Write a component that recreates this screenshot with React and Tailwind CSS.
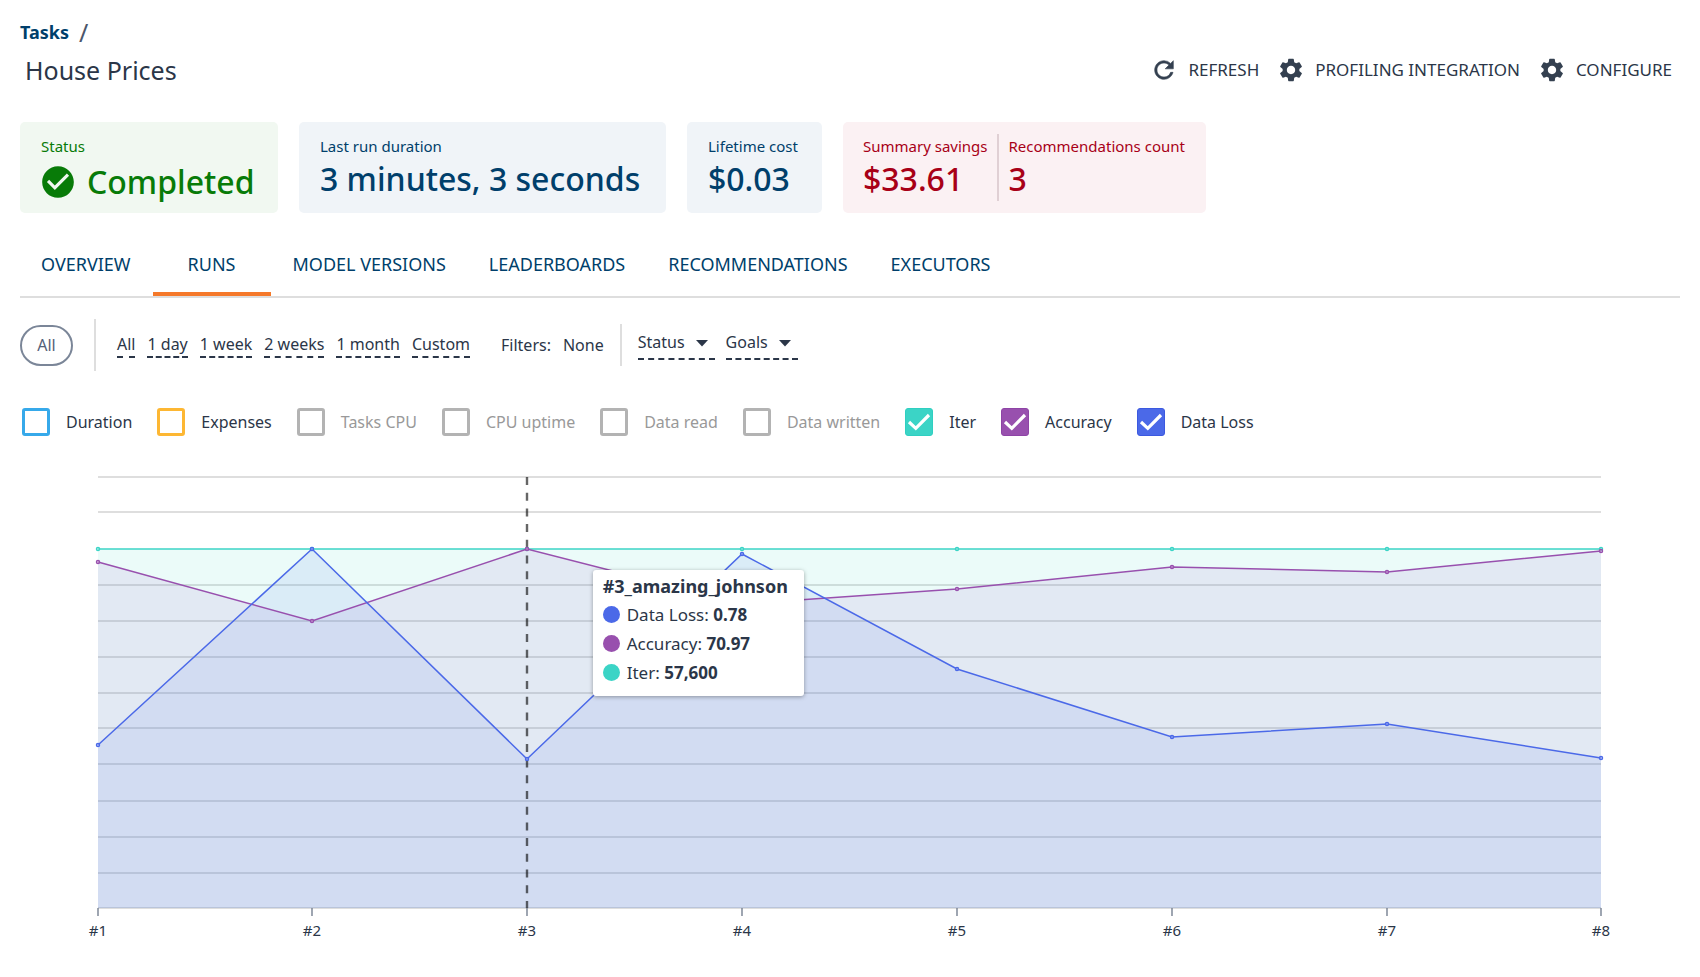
import { MdSettings, MdCheckCircle } from "react-icons/md";

const TABS = ["OVERVIEW", "RUNS", "MODEL VERSIONS", "LEADERBOARDS", "RECOMMENDATIONS", "EXECUTORS"];
const RANGES = ["All", "1 day", "1 week", "2 weeks", "1 month", "Custom"];

const METRICS = [
  { id: "duration", label: "Duration", box: "border-[#36a9ea]" },
  { id: "expenses", label: "Expenses", box: "border-[#fdb733]" },
  { id: "tasks-cpu", label: "Tasks CPU", box: "border-[#b3b3b3]", muted: true },
  { id: "cpu-uptime", label: "CPU uptime", box: "border-[#b3b3b3]", muted: true },
  { id: "data-read", label: "Data read", box: "border-[#b3b3b3]", muted: true },
  { id: "data-written", label: "Data written", box: "border-[#b3b3b3]", muted: true },
  { id: "iter", label: "Iter", box: "border-[#2fcfc1] bg-[#3bd4c6]", checked: true },
  { id: "accuracy", label: "Accuracy", box: "border-[#8e44a6] bg-[#9850ae]", checked: true },
  { id: "data-loss", label: "Data Loss", box: "border-[#3c59e0] bg-[#4b69e8]", checked: true },
];

const X = [98, 312, 527, 742, 957, 1172, 1387, 1601];
const BASE = 909;
const SERIES = [
  { id: "iter", color: "#3bd4c6", fill: "#3bd4c6", y: [550, 550, 550, 550, 550, 550, 550, 550] },
  { id: "accuracy", color: "#9850ae", fill: "#9850c8", y: [563, 622, 550, 605, 590, 568, 573, 552] },
  { id: "loss", color: "#4b69e8", fill: "#4069e8", y: [746, 550, 760, 555, 670, 738, 725, 759] },
];
const GRID = [478, 513, 586, 622, 658, 694, 729, 765, 802, 838, 874, 909];

function Chart() {
  return (
    <svg viewBox="20 470 1660 480" className="block h-auto w-full" role="img" aria-label="Metrics by run">
      {GRID.map((y) => (
        <line key={y} x1="98" x2="1601" y1={y} y2={y} stroke="#dedede" strokeWidth="1.8" />
      ))}
      {SERIES.map((s) => (
        <polygon
          key={s.id}
          fill={s.fill}
          fillOpacity="0.1"
          points={`98,${BASE} ${X.map((x, i) => `${x},${s.y[i]}`).join(" ")} 1601,${BASE}`}
        />
      ))}
      <line x1="527" x2="527" y1="478" y2="909" stroke="#000" strokeOpacity="0.6" strokeWidth="2.4" strokeDasharray="8 7.7" />
      {SERIES.map((s) => (
        <g key={s.id} stroke={s.color} strokeWidth="1.5">
          <polyline fill="none" points={X.map((x, i) => `${x},${s.y[i]}`).join(" ")} />
          {X.map((x, i) => (
            <circle key={x} cx={x} cy={s.y[i]} r="1.5" fill="#fff" fillOpacity="0.5" />
          ))}
        </g>
      ))}
      {X.map((x, i) => (
        <g key={x}>
          <line x1={x} x2={x} y1="909" y2="917" stroke="#6b7688" strokeWidth="1.3" />
          <text x={x} y="937" textAnchor="middle" fontSize="15" fill="#2b3648">{`#${i + 1}`}</text>
        </g>
      ))}
    </svg>
  );
}

function RefreshIcon({ className }) {
  return (
    <svg viewBox="0 0 24 24" className={className} fill="currentColor" stroke="currentColor" strokeWidth="0.5" aria-hidden="true">
      <path d="M17.65 6.35A7.958 7.958 0 0 0 12 4c-4.42 0-7.99 3.58-7.99 8s3.57 8 7.99 8c3.73 0 6.84-2.55 7.73-6h-2.08A5.99 5.99 0 0 1 12 18c-3.31 0-6-2.69-6-6s2.69-6 6-6c1.66 0 3.14.69 4.22 1.78L13 11h7V4l-2.35 2.35z" />
    </svg>
  );
}

function Action({ icon: Icon, children }) {
  return (
    <button className="flex items-center gap-[10px] text-[17px] leading-6 text-[#2b3648]">
      <Icon className="size-7 text-[#344050]" />
      {children}
    </button>
  );
}

function Stat({ label, children }) {
  return (
    <div>
      <div className="text-[15px] leading-6 whitespace-nowrap">{label}</div>
      <div className="text-[32px] leading-[42px] font-medium whitespace-nowrap">{children}</div>
    </div>
  );
}

function TooltipRow({ dot, label, value }) {
  return (
    <div className="flex items-center gap-[7px] text-[17px] leading-[29px]">
      <span className={`size-[17px] rounded-full ${dot}`} />
      <span>
        {label}: <b>{value}</b>
      </span>
    </div>
  );
}

function Picker({ label }) {
  return (
    <div className="flex items-center border-b-2 border-dashed border-[#2b3648] pb-1">
      <select aria-label={label} className="appearance-none bg-transparent pr-1 text-[16px] leading-6 [field-sizing:content]">
        <option>{label}</option>
      </select>
      <svg viewBox="0 0 26 24" className="h-6 w-[26px]" fill="currentColor" aria-hidden="true">
        <path d="M7 10h12l-6 6.5z" />
      </svg>
    </div>
  );
}

export default function App() {
  return (
    <main className="min-h-screen bg-white px-5 pt-4 font-['Noto_Sans',sans-serif] text-[#2b3648]">
      <header className="flex items-end justify-between">
        <div>
          <nav className="flex h-[31px] items-center gap-[10px]">
            <a href="#tasks" className="text-[18px] leading-7 font-bold text-[#003f6b]">Tasks</a>
            <span className="text-[25px] leading-7 text-[#4b566b]">/</span>
          </nav>
          <h1 className="pl-[5px] text-[25px] leading-[46px]">House Prices</h1>
        </div>
        <div className="flex gap-[18px] pr-2 pb-[9px]">
          <Action icon={RefreshIcon}>REFRESH</Action>
          <Action icon={MdSettings}>PROFILING INTEGRATION</Action>
          <Action icon={MdSettings}>CONFIGURE</Action>
        </div>
      </header>

      <section className="mt-[29px] flex gap-[21px]">
        <div className="h-[91px] min-w-[258px] rounded-[5px] bg-[#f1f8f1] px-[21px] pt-3 text-[#087b08]">
          <Stat label="Status">
            <span className="flex items-center gap-[10px] pt-[3px]">
              <MdCheckCircle className="-ml-[2px] size-[38px]" />
              Completed
            </span>
          </Stat>
        </div>
        <div className="h-[91px] min-w-[367px] rounded-[5px] bg-[#f0f4f8] px-[21px] pt-3 text-[#003f6b]">
          <Stat label="Last run duration">3 minutes, 3 seconds</Stat>
        </div>
        <div className="h-[91px] min-w-[135px] rounded-[5px] bg-[#f0f4f8] px-[21px] pt-3 text-[#003f6b]">
          <Stat label="Lifetime cost">$0.03</Stat>
        </div>
        <div className="flex h-[91px] min-w-[363px] rounded-[5px] bg-[#fbf1f3] px-5 py-3 text-[#a80017]">
          <div className="border-r-2 border-[#e0d0d4] pr-[9px]">
            <Stat label="Summary savings">$33.61</Stat>
          </div>
          <div className="pl-[10px]">
            <Stat label="Recommendations count">3</Stat>
          </div>
        </div>
      </section>

      <nav role="tablist" className="mt-5 flex gap-px border-b-2 border-[#dedede] text-[18px] text-[#003f6b]">
        {TABS.map((t) => (
          <button
            key={t}
            role="tab"
            aria-selected={t === "RUNS"}
            className={`h-[63px] border-b-4 px-[21px] pt-[3px] leading-6 ${
              t === "RUNS" ? "min-w-[118px] border-[#f5792a]" : "border-transparent"
            }`}
          >
            {t}
          </button>
        ))}
      </nav>

      <div className="mt-[21px] flex items-center text-[16px]">
        <button className="h-[41px] w-[53px] rounded-full border-2 border-[#7b8698] text-[#556179]">All</button>
        <div className="ml-[21px] h-[52px] w-[2px] bg-[#dedede]" />
        <div className="ml-[21px] flex gap-3">
          {RANGES.map((r) => (
            <button key={r} className="border-b-2 border-dashed border-[#2b3648] leading-6">
              {r}
            </button>
          ))}
        </div>
        <span className="ml-[31px]">Filters:</span>
        <span className="ml-3">None</span>
        <div className="ml-4 h-[42px] w-[2px] bg-[#dedede]" />
        <div className="ml-4 flex gap-[11px]">
          <Picker label="Status" />
          <Picker label="Goals" />
        </div>
      </div>

      <div className="mt-[37px] flex flex-wrap gap-[25px] pl-[2px]">
        {METRICS.map((m) => (
          <label
            key={m.id}
            htmlFor={m.id}
            className={`flex items-center gap-4 text-[16px] leading-7 ${m.muted ? "text-[#999]" : ""}`}
          >
            <span className="grid">
              <input
                id={m.id}
                type="checkbox"
                defaultChecked={m.checked}
                disabled={m.muted}
                className={`peer col-start-1 row-start-1 size-7 appearance-none rounded-[3px] border-3 checked:border ${m.box}`}
              />
              <svg
                viewBox="0 0 28 28"
                className="pointer-events-none invisible col-start-1 row-start-1 size-7 peer-checked:visible"
                fill="none"
                stroke="#fff"
                strokeWidth="3.2"
              >
                <path d="M4 14 10.8 20.3 24 7" />
              </svg>
            </span>
            {m.label}
          </label>
        ))}
      </div>

      <div className="relative mt-[33px]">
        <Chart />
        <div className="absolute top-[21%] left-[34.5%] min-w-[211px] rounded-[3px] bg-white px-[10px] pt-[2px] pb-[9px] whitespace-nowrap shadow-[0_1px_4px_rgba(0,0,0,0.35)]">
          <div className="text-[18px] leading-7 font-bold">#3_amazing_johnson</div>
          <TooltipRow dot="bg-[#4b69e8]" label="Data Loss" value="0.78" />
          <TooltipRow dot="bg-[#9850ae]" label="Accuracy" value="70.97" />
          <TooltipRow dot="bg-[#3bd4c6]" label="Iter" value="57,600" />
        </div>
      </div>
    </main>
  );
}
